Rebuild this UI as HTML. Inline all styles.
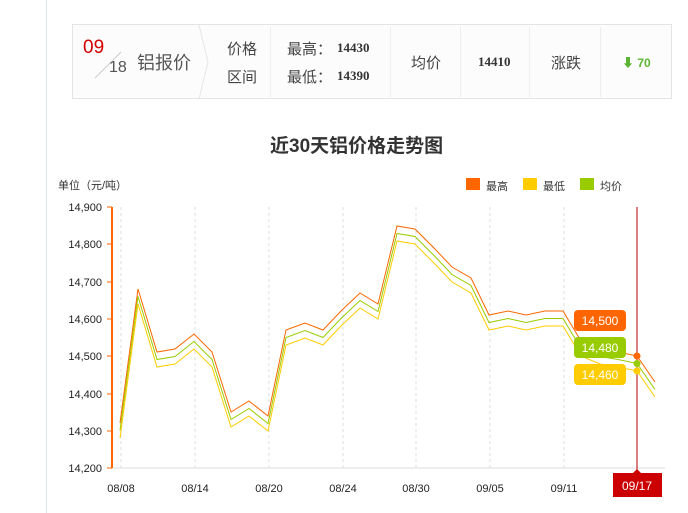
<!DOCTYPE html>
<html><head><meta charset="utf-8"><style>
*{margin:0;padding:0;box-sizing:border-box}
body{width:688px;height:513px;background:#fff;font-family:"Liberation Sans","Noto Sans CJK SC",sans-serif;position:relative;overflow:hidden}
.lb{position:absolute;left:46px;top:0;width:1px;height:513px;background:#dbe6f0}
.hd{position:absolute;left:72px;top:24px;width:600px;height:75px;border:1px solid #e4e4e4;background:#fcfcfc}
.t{position:absolute;color:#444;font-size:15px;white-space:nowrap}
.sep{position:absolute;top:2px;width:1px;height:70px;background:#eee}
.n{font-family:"Liberation Serif",serif;font-weight:bold;font-size:13px;color:#333}
</style></head><body>
<div class="lb"></div>
<div class="hd">
 <div class="t" style="left:10px;top:12px;color:#d40000;font-size:19px">09</div>
 <svg style="position:absolute;left:20px;top:25px" width="30" height="30"><line x1="28" y1="2" x2="2" y2="28" stroke="#ccc"/></svg>
 <div class="t" style="left:36px;top:34px;font-size:16px;color:#555">18</div>
 <div class="t" style="left:64px;top:24px;font-size:18px;color:#555">铝报价</div>
 <svg style="position:absolute;left:125px;top:0" width="12" height="74"><polyline points="1,0 10,37 1,74" fill="none" stroke="#e6e6e6"/></svg>
 <div class="t" style="left:154px;top:13px">价格</div>
 <div class="t" style="left:154px;top:41px">区间</div>
 <div class="sep" style="left:197px"></div>
 <div class="t" style="left:214px;top:13px">最高：</div><div class="t n" style="left:264px;top:15px">14430</div>
 <div class="t" style="left:214px;top:41px">最低：</div><div class="t n" style="left:264px;top:43px">14390</div>
 <div class="sep" style="left:317px"></div>
 <div class="t" style="left:338px;top:27px">均价</div>
 <div class="sep" style="left:387px"></div>
 <div class="t n" style="left:405px;top:29px">14410</div>
 <div class="sep" style="left:456px"></div>
 <div class="t" style="left:478px;top:27px">涨跌</div>
 <div class="sep" style="left:527px"></div>
 <div class="t" style="left:549px;top:29px;color:#5cb531;font-size:12px;font-weight:bold">⬇ 70</div>
</div>
<div class="t" style="left:270px;top:131px;font-size:19px;font-weight:bold;color:#333">近30天铝价格走势图</div>
<div class="t" style="left:58px;top:177px;font-size:11px;color:#333">单位（元/吨）</div>
<div style="position:absolute;left:466px;top:178px;width:14px;height:12px;background:#ff6600"></div><div class="t" style="left:486px;top:178px;font-size:11px;color:#333">最高</div>
<div style="position:absolute;left:523px;top:178px;width:14px;height:12px;background:#ffcc00"></div><div class="t" style="left:543px;top:178px;font-size:11px;color:#333">最低</div>
<div style="position:absolute;left:580px;top:178px;width:14px;height:12px;background:#99cc00"></div><div class="t" style="left:600px;top:178px;font-size:11px;color:#333">均价</div>
<svg style="position:absolute;left:0;top:0" width="688" height="513" font-family="Liberation Sans,sans-serif">
<g stroke="#ddd" stroke-dasharray="3,3">
<line x1="195" y1="207" x2="195" y2="468"/><line x1="269" y1="207" x2="269" y2="468"/><line x1="343" y1="207" x2="343" y2="468"/><line x1="416" y1="207" x2="416" y2="468"/><line x1="490" y1="207" x2="490" y2="468"/><line x1="564" y1="207" x2="564" y2="468"/><line x1="121" y1="207" x2="121" y2="468"/>
</g>
<line x1="112" y1="468" x2="665" y2="468" stroke="#ddd"/>
<line x1="112" y1="207" x2="112" y2="468" stroke="#ff6600" stroke-width="2"/>
<g stroke="#ff6600"><line x1="107" y1="207" x2="112" y2="207"/><line x1="107" y1="244" x2="112" y2="244"/><line x1="107" y1="282" x2="112" y2="282"/><line x1="107" y1="319" x2="112" y2="319"/><line x1="107" y1="356" x2="112" y2="356"/><line x1="107" y1="394" x2="112" y2="394"/><line x1="107" y1="431" x2="112" y2="431"/><line x1="107" y1="468" x2="112" y2="468"/></g>
<g font-size="11" fill="#222" text-anchor="end">
<text x="102" y="211">14,900</text><text x="102" y="248">14,800</text><text x="102" y="286">14,700</text><text x="102" y="323">14,600</text><text x="102" y="360">14,500</text><text x="102" y="398">14,400</text><text x="102" y="435">14,300</text><text x="102" y="472">14,200</text>
</g>
<g font-size="11" fill="#222" text-anchor="middle">
<text x="121" y="492">08/08</text><text x="195" y="492">08/14</text><text x="269" y="492">08/20</text><text x="343" y="492">08/24</text><text x="416" y="492">08/30</text><text x="490" y="492">09/05</text><text x="564" y="492">09/11</text>
</g>
<defs><polyline id="p" fill="none" points="120,423 138,289 157,352 175,349 194,334 212,352 231,412 249,401 268,416 286,330 305,323 323,330 341,311 360,293 378,304 397,226 415,229 434,248 452,267 471,278 489,315 508,311 526,315 545,311 563,311 581,341 600,349 618,352 637,356 655,382"/></defs>
<use href="#p" stroke="#ff6600"/>
<use href="#p" stroke="#99cc00" transform="translate(0,7.5)"/>
<use href="#p" stroke="#ffcc00" transform="translate(0,15)"/>
<line x1="637" y1="207" x2="637" y2="470" stroke="#b00000"/>
<circle cx="637" cy="356" r="3.5" fill="#ff6600"/><circle cx="637" cy="363.5" r="3.5" fill="#99cc00"/><circle cx="637" cy="371" r="3.5" fill="#ffcc00"/>
<rect x="574" y="310" width="52" height="21" rx="4" fill="#ff6600"/>
<rect x="574" y="337" width="52" height="21" rx="4" fill="#99cc00"/>
<rect x="574" y="364" width="52" height="21" rx="4" fill="#ffcc00"/>
<g font-size="12" fill="#fff" text-anchor="middle"><text x="600" y="325">14,500</text><text x="600" y="352">14,480</text><text x="600" y="379">14,460</text></g>
<rect x="613" y="473" width="49" height="24" fill="#cc0000"/><polygon points="633,473 637,469 641,473" fill="#cc0000"/>
<text x="637" y="490" font-size="12" fill="#fff" text-anchor="middle">09/17</text>
</svg>
</body></html>
